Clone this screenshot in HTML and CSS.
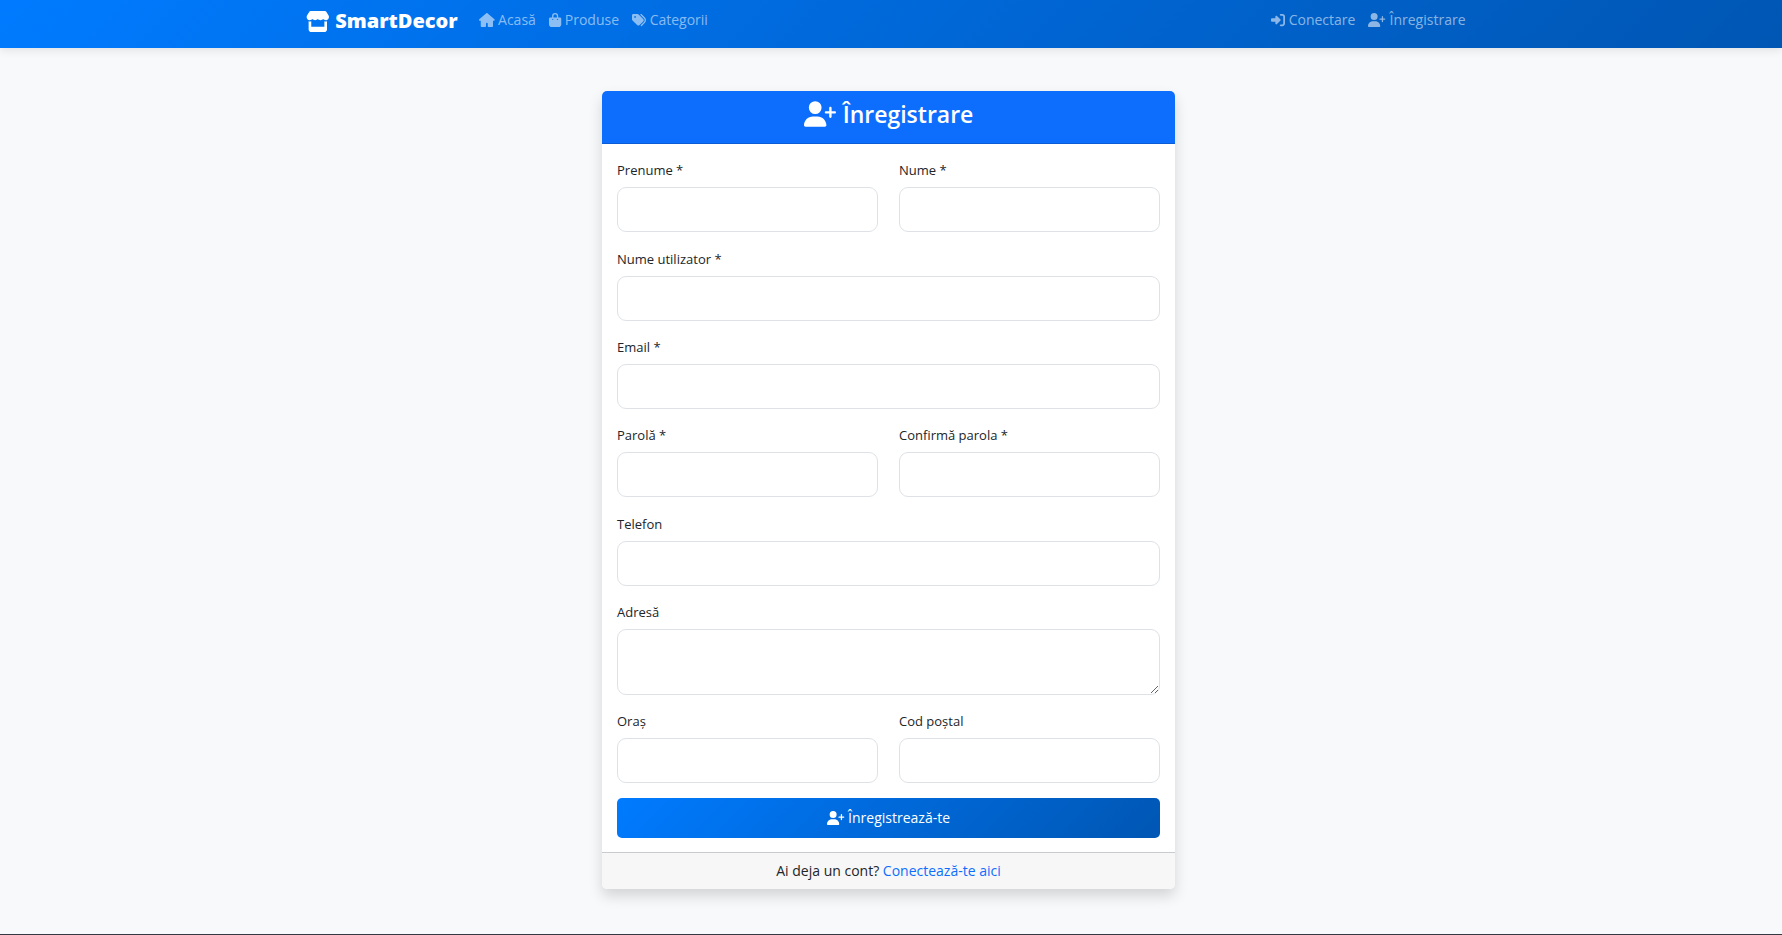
FILE: index.html
```html
<!DOCTYPE html>
<html lang="ro">
<head>
    <meta charset="UTF-8">
    <meta name="viewport" content="width=device-width, initial-scale=1.0">
    <title>Înregistrare - SmartDecor</title>
    <link rel="stylesheet" href="styles.css">
</head>
<body>
    <!-- Shared icons -->
    <svg class="icon-defs" width="0" height="0" aria-hidden="true">
        <symbol id="user-plus" viewBox="0 0 640 512">
            <path d="M96 128a128 128 0 1 1 256 0A128 128 0 1 1 96 128zM0 482.3C0 383.8 79.800 304 178.300 304h91.400C368.200 304 448 383.800 448 482.300c0 16.400-13.300 29.700-29.700 29.700H29.700C13.300 512 0 498.700 0 482.300zM504 312V248H440c-13.300 0-24-10.700-24-24s10.700-24 24-24h64V136c0-13.300 10.700-24 24-24s24 10.700 24 24v64h64c13.300 0 24 10.700 24 24s-10.700 24-24 24H552v64c0 13.300-10.700 24-24 24s-24-10.700-24-24z"/>
        </symbol>
    </svg>

    <nav class="navbar">
        <div class="container navbar-inner">
            <a class="brand" href="#">
                <svg class="icon" viewBox="0 0 576 512" aria-hidden="true"><path d="M547.600 103.800L490.300 13.100C485.200 5 476.100 0 466.400 0H109.600C99.900 0 90.800 5 85.700 13.100L28.300 103.800c-29.600 46.800-3.400 111.900 51.900 119.400c4 .5 8.100 .8 12.100 .8c26.100 0 49.300-11.400 65.200-29c15.900 17.600 39.100 29 65.200 29c26.100 0 49.300-11.400 65.200-29c15.900 17.600 39.100 29 65.200 29c26.200 0 49.300-11.400 65.200-29c16 17.600 39.100 29 65.200 29c4.100 0 8.100-.3 12.100-.8c55.500-7.400 81.800-72.500 52.100-119.400zM499.700 254.900l-.1 0c-5.300 .7-10.700 1.100-16.200 1.100c-12.400 0-24.300-1.900-35.400-5.300V384H128V250.600c-11.200 3.500-23.200 5.400-35.600 5.400c-5.500 0-11-.4-16.300-1.100l-.1 0c-4.100-.6-8.100-1.300-12-2.300V384v64c0 35.300 28.700 64 64 64H448c35.300 0 64-28.700 64-64V384 252.600c-4 1-8 1.800-12.300 2.300z"/></svg>
                SmartDecor
            </a>
            <div class="nav-links">
                <a href="#">
                    <svg class="icon" viewBox="0 0 576 512" aria-hidden="true"><path d="M575.800 255.500c0 18-15 32.100-32 32.100h-32l.7 160.200c0 2.700-.2 5.400-.5 8.100V472c0 22.100-17.900 40-40 40H352c-17.700 0-32-14.300-32-40v-88c0-17.700-14.300-32-32-32s-32 14.300-32 32v88c0 22.100-17.900 40-40 40H104c-22.100 0-40-17.900-40-40V287.600H32c-18 0-32-14-32-32.100c0-9 3-17 10-24L266.400 8c7-7 15-8 22-8s15 2 21 7L564.800 231.500c8 7 12 15 11 24z"/></svg>
                    Acasă
                </a>
                <a href="#">
                    <svg class="icon" viewBox="0 0 448 512" aria-hidden="true"><path fill-rule="evenodd" d="M112 160v-48a112 112 0 0 1 224 0v48h64c26.500 0 48 21.500 48 48v208c0 53-43 96-96 96H96c-53 0-96-43-96-96V208c0-26.500 21.500-48 48-48h64zm48 0h128v-48a64 64 0 0 0-128 0v48zm-24 96a24 24 0 1 0 0-48 24 24 0 1 0 0 48zm200-24a24 24 0 1 0-48 0 24 24 0 1 0 48 0z"/></svg>
                    Produse
                </a>
                <a href="#">
                    <svg class="icon" viewBox="0 0 512 512" aria-hidden="true"><path fill-rule="evenodd" d="M345 39.100L472.800 168.400c52.400 53 52.400 138.200 0 191.200L360.800 472.900c-9.300 9.400-24.500 9.500-33.900 .2s-9.500-24.500-.2-33.900L438.600 325.900c33.900-34.300 33.900-89.400 0-123.700L310.900 72.900c-9.300-9.400-9.200-24.600 .2-33.900s24.600-9.200 33.900 .2zM0 229.500V80C0 53.500 21.500 32 48 32H197.500c17 0 33.300 6.700 45.300 18.700l168 168c25 25 25 65.500 0 90.500L277.300 442.700c-25 25-65.500 25-90.500 0l-168-168C6.700 262.700 0 246.500 0 229.500zM144 144a32 32 0 1 0-64 0 32 32 0 1 0 64 0z"/></svg>
                    Categorii
                </a>
            </div>
            <div class="nav-links nav-account">
                <a href="#">
                    <svg class="icon" viewBox="0 0 512 512" aria-hidden="true"><path d="M217.900 105.900L340.700 228.700c7.200 7.200 11.300 17.100 11.300 27.300s-4.100 20.100-11.300 27.300L217.900 406.100c-6.400 6.400-15 9.900-24 9.900c-18.700 0-33.900-15.200-33.900-33.900V320H32c-17.700 0-32-14.300-32-32V224c0-17.700 14.300-32 32-32H160V129.900c0-18.700 15.200-33.900 33.900-33.900c9 0 17.600 3.600 24 9.900zM352 416h64c17.700 0 32-14.300 32-32V128c0-17.700-14.300-32-32-32H352c-17.700 0-32-14.300-32-32s14.300-32 32-32h64c53 0 96 43 96 96V384c0 53-43 96-96 96H352c-17.700 0-32-14.300-32-32s14.300-32 32-32z"/></svg>
                    Conectare
                </a>
                <a href="#">
                    <svg class="icon icon-wide" aria-hidden="true"><use href="#user-plus"/></svg>
                    Înregistrare
                </a>
            </div>
        </div>
    </nav>

    <main>
        <div class="container">
            <div class="card">
                <div class="card-header">
                    <h1>
                        <svg class="icon icon-wide" aria-hidden="true"><use href="#user-plus"/></svg>
                        Înregistrare
                    </h1>
                </div>
                <form class="card-body">
                    <div class="row">
                        <div class="field">
                            <label for="firstName">Prenume *</label>
                            <input type="text" id="firstName" required>
                        </div>
                        <div class="field">
                            <label for="lastName">Nume *</label>
                            <input type="text" id="lastName" required>
                        </div>
                    </div>
                    <div class="field">
                        <label for="username">Nume utilizator *</label>
                        <input type="text" id="username" required>
                    </div>
                    <div class="field">
                        <label for="email">Email *</label>
                        <input type="email" id="email" required>
                    </div>
                    <div class="row">
                        <div class="field">
                            <label for="password">Parolă *</label>
                            <input type="password" id="password" required>
                        </div>
                        <div class="field">
                            <label for="confirmPassword">Confirmă parola *</label>
                            <input type="password" id="confirmPassword" required>
                        </div>
                    </div>
                    <div class="field">
                        <label for="phone">Telefon</label>
                        <input type="tel" id="phone">
                    </div>
                    <div class="field">
                        <label for="address">Adresă</label>
                        <textarea id="address" rows="2"></textarea>
                    </div>
                    <div class="row">
                        <div class="field">
                            <label for="city">Oraș</label>
                            <input type="text" id="city">
                        </div>
                        <div class="field">
                            <label for="postalCode">Cod poștal</label>
                            <input type="text" id="postalCode">
                        </div>
                    </div>
                    <button type="submit">
                        <svg class="icon icon-wide" aria-hidden="true"><use href="#user-plus"/></svg>
                        Înregistrează-te
                    </button>
                </form>
                <div class="card-footer">
                    Ai deja un cont? <a href="#">Conectează-te aici</a>
                </div>
            </div>
        </div>
    </main>

    <footer class="footer"></footer>
</body>
</html>
```
FILE: styles.css
```css
* {
    box-sizing: border-box;
}

body {
    margin: 0;
    min-height: 100vh;
    display: flex;
    flex-direction: column;
    background-color: #f8f9fa;
    color: #212529;
    font-family: "Segoe UI", "Open Sans", "Noto Sans", sans-serif;
    font-size: 14px;
    line-height: 22px;
}

a {
    color: #0d6efd;
    text-decoration: none;
}

.icon-defs {
    position: absolute;
}

.icon {
    height: 1em;
    fill: currentColor;
    vertical-align: -2px;
    overflow: visible;
}

.icon-wide {
    width: 1.25em;
}

.container {
    width: 100%;
    max-width: 1188px;
    margin: 0 auto;
    padding: 0 11px;
}

/* Navbar */
.navbar {
    padding-right: 5px;
    background: linear-gradient(135deg, #007bff, #0056b3);
    box-shadow: 0 2px 9px rgba(0, 0, 0, 0.1);
}

.navbar-inner {
    display: flex;
    align-items: flex-start;
    height: 48px;
}

.brand {
    display: flex;
    align-items: center;
    gap: 6px;
    margin-right: 14px;
    padding-top: 5px;
    color: #fff;
    font-size: 20px;
    font-weight: 800;
    line-height: 32px;
}

.brand .icon {
    height: 21px;
}

.nav-links {
    display: flex;
    padding-top: 9px;
}

.nav-links a {
    padding: 0 6px 0 7px;
    color: rgba(255, 255, 255, 0.55);
}

.nav-account {
    margin-left: auto;
}

/* Register card */
main {
    flex: 1;
    padding-right: 5px;
}

.card {
    width: 573px;
    max-width: 100%;
    margin: 43px auto 45px;
    border-radius: 5px;
    background-color: #fff;
    box-shadow: 0 7px 14px rgba(0, 0, 0, 0.15);
    overflow: hidden;
}

.card-header {
    padding: 7px 14px 13px;
    border-bottom: 1px solid #0b5cd5;
    background-color: #0d6efd;
    color: #fff;
    text-align: center;
}

.card-header h1 {
    display: flex;
    justify-content: center;
    align-items: center;
    gap: 7px;
    margin: 0;
    font-size: 23px;
    font-weight: 600;
    line-height: 32px;
}

.card-header .icon {
    width: 32px;
    height: 26px;
}

.card-body {
    padding: 14px 15px;
}

.row {
    display: grid;
    grid-template-columns: 1fr 1fr;
    gap: 21px;
    margin-bottom: 15px;
}

.field {
    margin-bottom: 14px;
}

.row .field {
    margin-bottom: 0;
}

label {
    display: block;
    padding-top: 1px;
    margin-bottom: 6px;
    font-size: 13px;
}

input,
textarea {
    display: block;
    width: 100%;
    height: 45px;
    padding: 10px 14px;
    border: 1px solid #dee2e6;
    border-radius: 9px;
    background-color: #fff;
    color: inherit;
    font: inherit;
}

textarea {
    height: 66px;
    resize: vertical;
}

button {
    display: block;
    width: 100%;
    height: 40px;
    border: 0;
    border-radius: 5px;
    background: linear-gradient(135deg, #007bff, #0056b3);
    color: #fff;
    font: inherit;
    font-weight: 500;
    cursor: pointer;
}

.card-footer {
    padding: 7px 14px;
    border-top: 1px solid #c9cccf;
    background-color: #f7f7f7;
    text-align: center;
}

.footer {
    height: 1px;
    background-color: #343a40;
}
```
